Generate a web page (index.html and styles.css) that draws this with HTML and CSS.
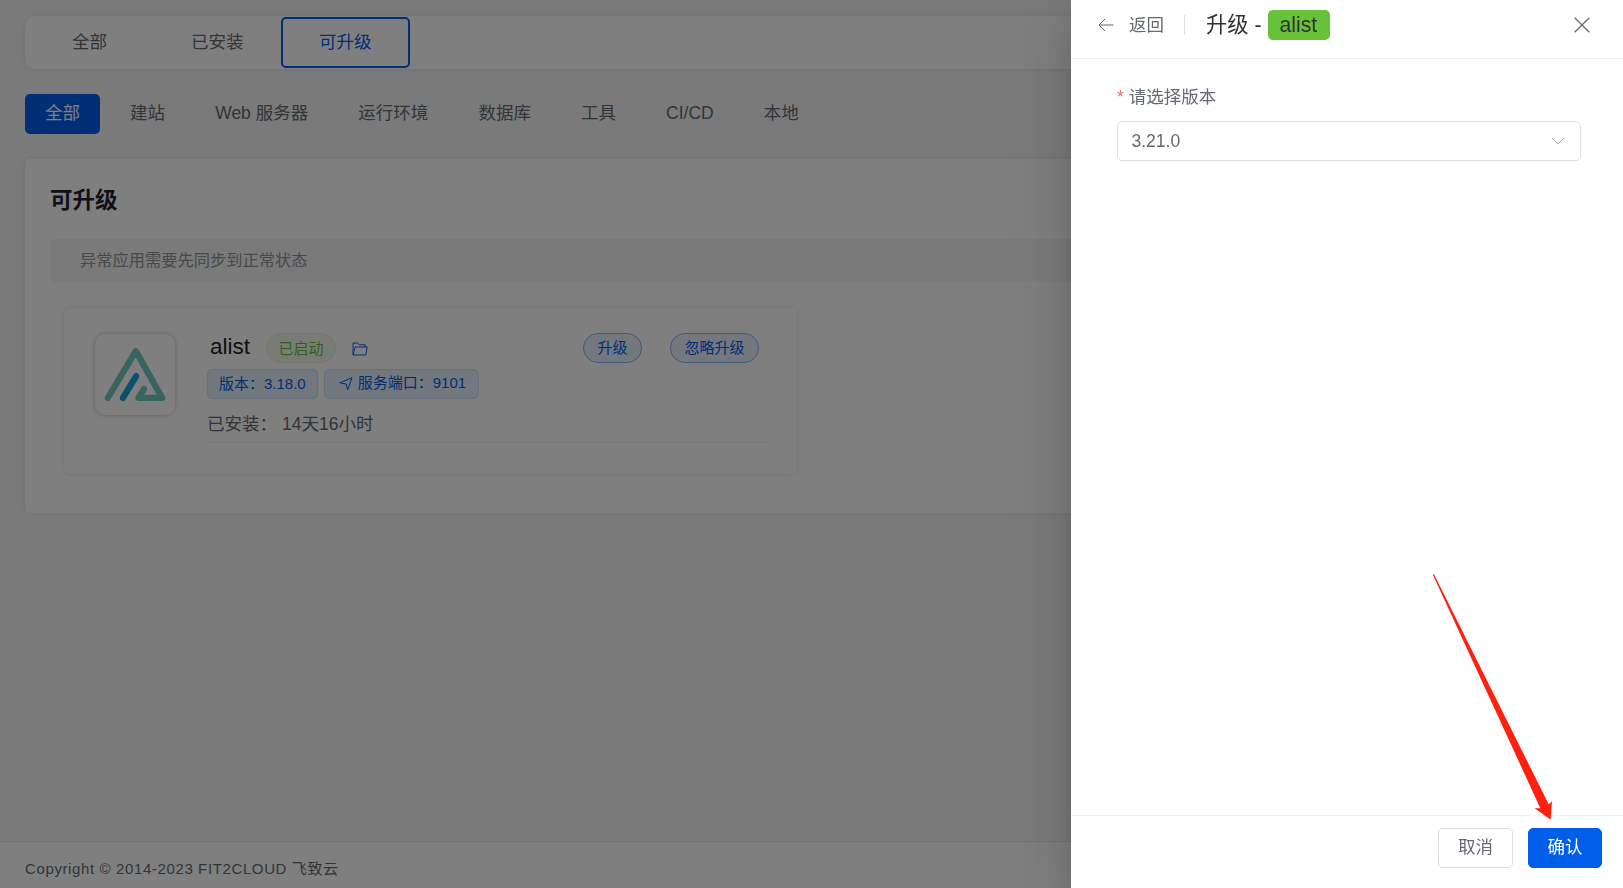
FILE: index.html
```html
<!DOCTYPE html>
<html lang="zh-CN">

<head>
  <meta charset="UTF-8">
  <meta name="viewport" content="width=device-width, initial-scale=1.0">
  <title>应用商店</title>
  <link rel="stylesheet" href="styles.css">
</head>

<body>
  <div class="page">
    <main class="content">
      <nav class="router-tabs">
        <button class="router-tab">全部</button>
        <button class="router-tab">已安装</button>
        <button class="router-tab active">可升级</button>
      </nav>

      <div class="categories">
        <button class="category active">全部</button>
        <button class="category">建站</button>
        <button class="category">Web 服务器</button>
        <button class="category">运行环境</button>
        <button class="category">数据库</button>
        <button class="category">工具</button>
        <button class="category">CI/CD</button>
        <button class="category">本地</button>
      </div>

      <section class="panel">
        <h1>可升级</h1>
        <div class="notice">异常应用需要先同步到正常状态</div>

        <div class="app-card">
          <div class="app-logo">
            <svg viewBox="28 26 243 244">
              <path class="logo-teal" d="M67 219 152 77 232 219H160L177 192" />
              <path class="logo-blue" d="M113 219 153 153" />
            </svg>
          </div>
          <div class="app-info">
            <div class="app-head">
              <span class="app-name">alist</span>
              <span class="status">已启动</span>
              <svg class="folder" viewBox="0 0 16 14">
                <path d="M1 13V1h4.6l1.6 1.8h6V5M1 13 3 5H15.2l-1.4 8z" />
              </svg>
              <div class="app-actions">
                <button class="round-btn">升级</button>
                <button class="round-btn">忽略升级</button>
              </div>
            </div>
            <div class="app-tags">
              <span class="tag">版本：3.18.0</span>
              <span class="tag tag-port">
                <svg viewBox="0 0 14 14">
                  <path d="M.8 5.8 13 .8 8.6 13 7.2 7z" />
                </svg>
                服务端口：9101
              </span>
            </div>
            <div class="app-time"><span>已安装：</span><span>14天16小时</span></div>
          </div>
        </div>
      </section>
    </main>

    <footer class="footer">Copyright © 2014-2023 FIT2CLOUD 飞致云</footer>
  </div>

  <div class="overlay">
    <aside class="drawer">
      <header class="drawer-header">
        <svg class="back-icon" viewBox="0 0 16 16">
          <path d="M15.5 8H1M7 2 1 8l6 6" />
        </svg>
        <span class="back-text">返回</span>
        <span class="divider"></span>
        <span class="drawer-title">升级 -</span>
        <span class="name-tag">alist</span>
        <svg class="close-icon" viewBox="0 0 16 16">
          <path d="M.7.7l14.6 14.6M15.3.7.7 15.3" />
        </svg>
      </header>

      <div class="drawer-body">
        <label class="form-label"><span class="required">*</span>请选择版本</label>
        <div class="select">
          <span>3.21.0</span>
          <svg viewBox="0 0 14 8">
            <path d="M1 1l6 6 6-6" />
          </svg>
        </div>
      </div>

      <div class="drawer-footer">
        <button class="btn">取消</button>
        <button class="btn btn-primary">确认</button>
      </div>
    </aside>
  </div>

  <svg class="arrow" viewBox="96 38 364 744">
    <path d="M98 42h4L446 732l10-9-4 55-48-34h17z" />
  </svg>
</body>

</html>
```
FILE: styles.css
```css
* {
  box-sizing: border-box;
}

body {
  margin: 0;
  font-family: "Liberation Sans", "Noto Sans CJK SC", sans-serif;
  font-size: 17.5px;
  color: #646a73;
  overflow: hidden;
}

button {
  font-family: inherit;
  font-size: inherit;
  line-height: 20px;
  color: inherit;
  background: none;
  border: none;
  padding: 0;
}

svg {
  display: block;
  flex: none;
  fill: none;
  stroke: currentColor;
}

.page {
  display: flex;
  flex-direction: column;
  height: 100vh;
  background-color: #f4f4f4;
}

.content {
  flex: 1;
  padding: 16px 25px 0;
}

.router-tabs {
  display: flex;
  height: 53px;
  padding: 1px 9px;
  background-color: #fff;
  border-radius: 10px;
  box-shadow: 0 0 5px rgba(0, 94, 235, 0.1);
}

.router-tab {
  padding: 0 36px 2px;
  margin-right: 8px;
  border: 2px solid transparent;
  border-radius: 5px;
}

.router-tab + .router-tab {
  margin-right: -1px;
}

.router-tab.active {
  padding: 0 36.5px 2px;
  border-color: #005eeb;
  color: #005eeb;
}

.categories {
  display: flex;
  gap: 10.1px;
  margin-top: 25px;
}

.category {
  height: 40px;
  padding: 0 20px 3px;
  border-radius: 5px;
}

.category.active {
  background-color: #005eeb;
  color: #fff;
}

.panel {
  height: 354px;
  margin-top: 25px;
  padding: 25px;
  background-color: #fff;
  border-radius: 5px;
  box-shadow: 0 0 5px rgba(0, 94, 235, 0.1);
}

.panel h1 {
  margin: 0;
  font-size: 22.5px;
  line-height: 34px;
  color: #1f2329;
}

.notice {
  height: 43px;
  margin-top: 21px;
  padding-left: 30px;
  line-height: 43px;
  font-size: 16.25px;
  color: #909399;
  background-color: #f4f4f5;
  border-radius: 5px;
}

.app-card {
  display: flex;
  width: 733px;
  height: 166px;
  margin: 26px 0 0 14px;
  padding: 25px 25px 0 31px;
  border-radius: 5px;
  box-shadow: 0 0 4px rgba(0, 94, 235, 0.18);
}

.app-logo {
  width: 80px;
  height: 81px;
  margin-top: 1px;
  border-radius: 10px;
  box-shadow: 0 0 4px rgba(0, 0, 0, 0.25);
}

.app-logo svg {
  width: 80px;
  height: 81px;
  stroke-width: 19;
  stroke-linecap: round;
  stroke-linejoin: round;
}

.logo-teal {
  stroke: #70c6be;
}

.logo-blue {
  stroke: #1ba0d8;
}

.app-info {
  flex: 1;
  margin-left: 32px;
}

.app-head {
  display: flex;
  align-items: center;
  height: 30px;
}

.app-name {
  margin: 0 16px 2px 3px;
  font-size: 22.5px;
  line-height: 26px;
  color: #1f2329;
}

.status {
  height: 30px;
  padding: 0 11.5px;
  line-height: 30px;
  font-size: 15px;
  color: #67c23a;
  background-color: #f0f9eb;
  border: 1px solid #e1f3d8;
  border-radius: 15px;
}

.folder {
  width: 16px;
  height: 14px;
  margin: 1px 0 0 16px;
  stroke: #005eeb;
}

.app-actions {
  display: flex;
  gap: 28px;
  margin: 0 13px 0 auto;
}

.round-btn {
  height: 30px;
  padding: 0 13.5px;
  font-size: 15px;
  color: #005eeb;
  background-color: #e6effd;
  border: 1px solid #80aff5;
  border-radius: 15px;
}

.app-tags {
  display: flex;
  gap: 6px;
  margin-top: 6px;
}

.tag {
  display: flex;
  align-items: center;
  height: 30px;
  padding: 0 11px;
  line-height: 20px;
  font-size: 15px;
  color: #005eeb;
  background-color: #e6effd;
  border: 1px solid #ccdffb;
  border-radius: 5px;
}

.tag-port {
  padding: 0 12px 2px 14px;
  gap: 5px;
}

.tag-port svg {
  width: 14px;
  height: 14px;
  margin-top: 2px;
}

.app-time {
  display: flex;
  gap: 5px;
  height: 44px;
  line-height: 51px;
  border-bottom: 1px solid #f0f0f2;
}

.footer {
  height: 47px;
  padding-left: 25px;
  border-top: 1px solid #e4e4e4;
  line-height: 54px;
  font-size: 15px;
  letter-spacing: 0.62px;
  background-color: #fff;
}

.overlay {
  position: fixed;
  inset: 0;
  display: flex;
  justify-content: flex-end;
  background-color: rgba(0, 0, 0, 0.5);
}

.drawer {
  display: flex;
  flex-direction: column;
  width: 552px;
  background-color: #fff;
  box-shadow: 0 20px 60px 20px rgba(0, 0, 0, 0.08), 0 15px 40px rgba(0, 0, 0, 0.12), 0 10px 20px -10px rgba(0, 0, 0, 0.16);
}

.drawer-header {
  display: flex;
  align-items: center;
  height: 59px;
  padding: 0 33px 8px 27px;
  line-height: 24px;
  border-bottom: 1px solid #f0f0f2;
}

.back-icon {
  width: 16px;
  height: 16px;
}

.back-text {
  margin-left: 15px;
}

.divider {
  width: 1px;
  height: 20px;
  margin: 0 21px 0 20px;
  background-color: #dcdfe6;
}

.drawer-title {
  font-size: 21.25px;
  color: #303133;
}

.name-tag {
  height: 30px;
  margin-left: 7px;
  padding: 0 13px 0 11px;
  line-height: 30px;
  font-size: 21.25px;
  color: #303133;
  background-color: #67c23a;
  border-radius: 5px;
}

.close-icon {
  width: 16px;
  height: 16px;
  margin-left: auto;
  stroke-width: 1.3;
}

.drawer-body {
  flex: 1;
  padding: 24px 42px 0 46px;
}

.form-label {
  display: flex;
  height: 38px;
  line-height: 28px;
}

.required {
  margin-right: 5px;
  color: #f56c6c;
}

.select {
  display: flex;
  align-items: center;
  justify-content: space-between;
  height: 40px;
  padding: 0 15px 0 13.5px;
  border: 1px solid #dcdfe6;
  border-radius: 5px;
}

.select svg {
  width: 14px;
  height: 8px;
  color: #a8abb2;
}

.drawer-footer {
  display: flex;
  justify-content: flex-end;
  gap: 15px;
  height: 73px;
  padding: 12px 21px 0 0;
  border-top: 1px solid #f0f0f2;
}

.btn {
  width: 75px;
  height: 40px;
  padding-bottom: 2px;
  border: 1px solid #dcdfe6;
  border-radius: 5px;
}

.btn-primary {
  width: 74px;
  color: #fff;
  background-color: #005eeb;
  border-color: #005eeb;
}

/* pointer drawn over the drawer, towards the confirm button */
.arrow {
  position: absolute;
  left: 1432px;
  top: 572.67px;
  width: 121.33px;
  height: 248px;
}

.arrow path {
  fill: #ff2010;
  stroke: none;
}
```
